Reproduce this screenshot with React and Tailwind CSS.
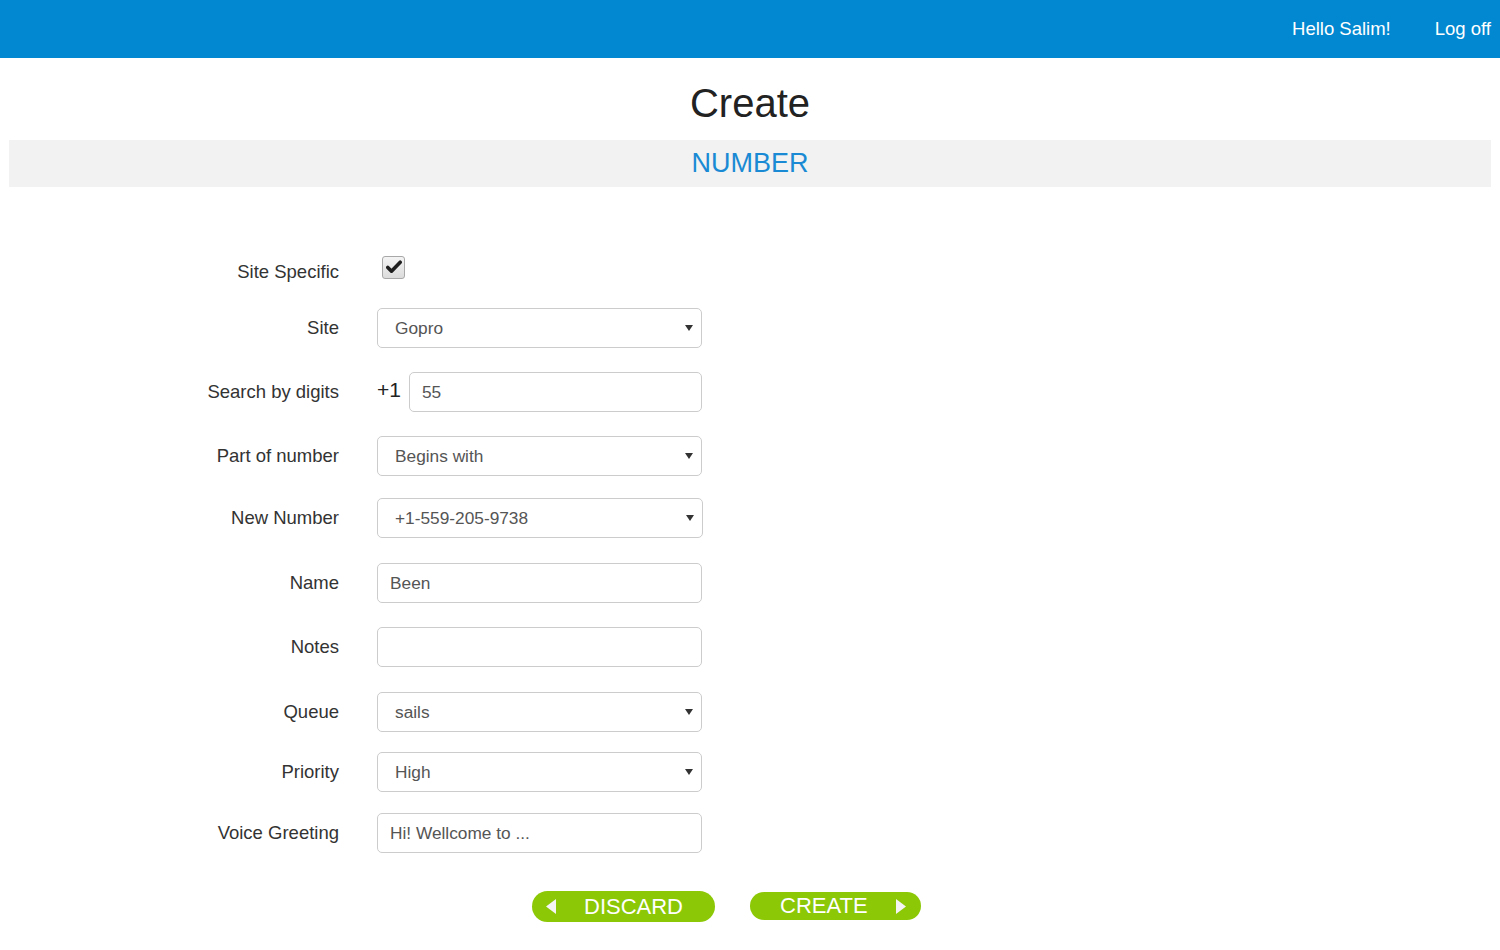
import React from "react";

const font = { fontFamily: '"Liberation Sans", Arial, sans-serif' };

const Arrow = () => (
  <svg
    className="pointer-events-none absolute right-[9px] top-1/2 -translate-y-1/2"
    width="8"
    height="6"
    viewBox="0 0 8 6"
  >
    <path d="M0 0 H8 L4 6 Z" fill="#333" />
  </svg>
);

const SelectBox = ({ value, wide }) => (
  <div className={`relative ${wide ? "w-[326px]" : "w-[325px]"} h-[40px]`}>
    <select
      defaultValue={value}
      className="w-full h-full appearance-none rounded-[5px] border border-[#cccccc] bg-white pl-[17px] pr-8 pt-[1px] text-[17.3px] text-[#555] outline-none"
    >
      <option>{value}</option>
    </select>
    <Arrow />
  </div>
);

const TextBox = ({ value, className = "w-[325px]" }) => (
  <input
    type="text"
    defaultValue={value}
    className={`${className} h-[40px] rounded-[5px] border border-[#cccccc] bg-white px-[12px] pt-[1px] text-[17.3px] text-[#555] outline-none`}
  />
);

const Row = ({ label, mt, children }) => (
  <div className={`flex items-center h-[40px] ${mt}`}>
    <label className="w-[339px] text-right text-[18.5px] text-[#333]">{label}</label>
    <div className="ml-[38px] flex items-center">{children}</div>
  </div>
);

const App = () => {
  return (
    <div className="min-h-screen bg-white" style={font}>
      {/* Top bar */}
      <header className="h-[58px] bg-[#0288d1] flex items-center justify-end pr-[9px] gap-[44px] text-white text-[18.5px]">
        <a href="#">Hello Salim!</a>
        <a href="#">Log off</a>
      </header>

      <h1 className="pt-[20px] mb-[12px] text-center text-[40px] leading-[50px] text-[#222]">
        Create
      </h1>

      <div className="mx-[9px] h-[47px] bg-[#f2f2f2] flex items-center justify-center text-[27px] text-[#1a8ad4]">
        NUMBER
      </div>

      {/* Form */}
      <form className="mt-[65px]">
        <Row label="Site Specific" mt="mt-0">
          <span className="ml-[5px] mb-[10px] w-[23px] h-[23px] rounded-[3px] border border-[#a8a8a8] bg-gradient-to-b from-[#f4f4f4] to-[#dcdcdc] flex items-center justify-center">
            <svg width="16" height="14" viewBox="0 0 16 14">
              <path d="M1.8 7.5 L5.5 11.2 L14.2 2.2" fill="none" stroke="#1e1e1e" strokeWidth="3.6" strokeLinecap="round" strokeLinejoin="round" />
            </svg>
          </span>
        </Row>

        <Row label="Site" mt="mt-[16px]">
          <SelectBox value="Gopro" />
        </Row>

        <Row label="Search by digits" mt="mt-[24px]">
          <span className="w-[32px] text-[21px] text-[#222] mb-[4px]">+1</span>
          <TextBox value="55" className="w-[293px]" />
        </Row>

        <Row label="Part of number" mt="mt-[24px]">
          <SelectBox value="Begins with" />
        </Row>

        <Row label="New Number" mt="mt-[22px]">
          <SelectBox value="+1-559-205-9738" wide />
        </Row>

        <Row label="Name" mt="mt-[25px]">
          <TextBox value="Been" />
        </Row>

        <Row label="Notes" mt="mt-[24px]">
          <TextBox value="" />
        </Row>

        <Row label="Queue" mt="mt-[25px]">
          <SelectBox value="sails" />
        </Row>

        <Row label="Priority" mt="mt-[20px]">
          <SelectBox value="High" />
        </Row>

        <Row label="Voice Greeting" mt="mt-[21px]">
          <TextBox value="Hi! Wellcome to ..." />
        </Row>

        {/* Buttons */}
        <div className="mt-[38px] flex items-start">
          <button
            type="button"
            className="ml-[532px] w-[183px] h-[31px] rounded-full bg-[#8cc806] text-white text-[22px] flex items-center"
          >
            <svg className="ml-[14px]" width="10" height="15" viewBox="0 0 10 15">
              <path d="M10 0 V15 L0 7.5 Z" fill="#f4f4f4" />
            </svg>
            <span className="ml-[28px]">DISCARD</span>
          </button>
          <button
            type="button"
            className="ml-[35px] mt-[1px] w-[171px] h-[28px] rounded-full bg-[#8cc806] text-white text-[22px] flex items-center"
          >
            <span className="ml-[30px] -mt-[2px]">CREATE</span>
            <svg className="ml-[28px]" width="10" height="15" viewBox="0 0 10 15">
              <path d="M0 0 V15 L10 7.5 Z" fill="#f4f4f4" />
            </svg>
          </button>
        </div>
      </form>
    </div>
  );
};

export default App;
